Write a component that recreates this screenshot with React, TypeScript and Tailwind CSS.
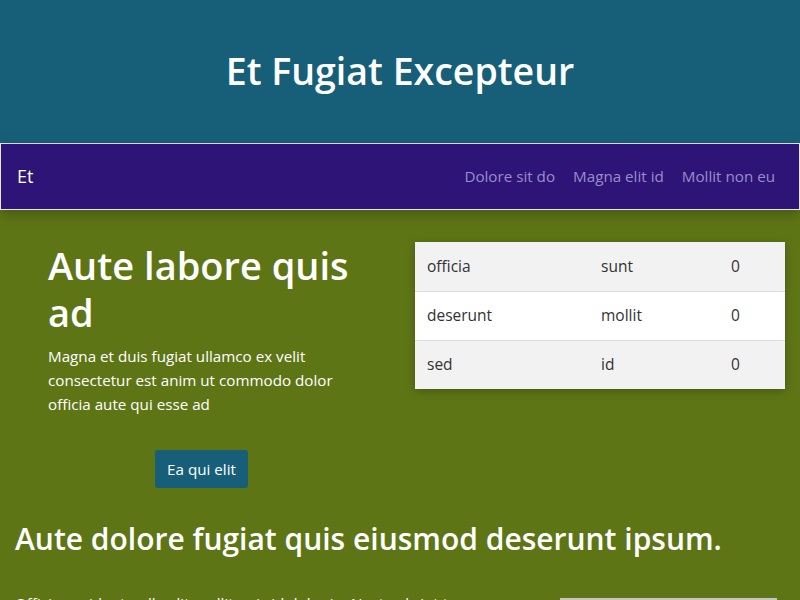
const rows = [
  ['officia', 'sunt', '0'],
  ['deserunt', 'mollit', '0'],
  ['sed', 'id', '0'],
]

export default function App() {
  return (
    <div className="min-h-[600px] bg-[#5e7516] font-['Open_Sans',sans-serif] text-white">
      <header className="flex h-[144px] items-center justify-center border-b border-[#e6e6e6] bg-[#175f78]">
        <h1 className="text-[37.5px] font-semibold">Et Fugiat Excepteur</h1>
      </header>

      <nav className="relative z-10 flex h-[66px] items-center justify-between border-x border-b border-[#e6e6e6] bg-[#2d1476] pl-[16px] pr-[24px] shadow-[0_4px_12px_rgba(0,0,0,0.25)]">
        <span className="text-[18px]">Et</span>
        <ul className="flex gap-[18px] text-[15.2px] text-[#9a8dcc]">
          <li>Dolore sit do</li>
          <li>Magna elit id</li>
          <li>Mollit non eu</li>
        </ul>
      </nav>

      <main className="overflow-hidden">
        <section className="flex items-start pt-[32px]">
          <div className="w-[415px] pl-[48px] pr-[60px]">
            <h2 className="text-[38px] font-semibold leading-[47px]">Aute labore quis ad</h2>
            <p className="mt-[8px] text-[15.2px] leading-[24px]">
              Magna et duis fugiat ullamco ex velit consectetur est anim ut commodo dolor officia aute qui esse ad
            </p>
            <div className="mt-[34px] flex justify-center">
              <button className="rounded-[3px] bg-[#175f78] px-[12px] py-[8px] text-[15.2px] leading-[22px] text-white">
                Ea qui elit
              </button>
            </div>
          </div>

          <table className="w-[370px] text-[15.5px] text-[#333] shadow-[0_2px_8px_rgba(0,0,0,0.25)]">
            <tbody>
              {rows.map((r, i) => (
                <tr key={i} className={i % 2 === 0 ? 'h-[49px] border-b border-[#dddde0] bg-[#f2f2f2] last:border-b-0' : 'h-[49px] border-b border-[#dddde0] bg-white'}>
                  <td className="w-[186px] pl-[12px]">{r[0]}</td>
                  <td className="w-[130px]">{r[1]}</td>
                  <td>{r[2]}</td>
                </tr>
              ))}
            </tbody>
          </table>
        </section>

        <section className="px-[15px] pt-[28px]">
          <h2 className="text-[30px] font-semibold">Aute dolore fugiat quis eiusmod deserunt ipsum.</h2>
          <div className="mt-[31px] flex items-start justify-between">
            <p className="w-[520px] text-[15.2px] leading-[22px]">
              Officia proident nulla elit mollit quis id dolor in. Nostrud sint tempor dolore ullamco pariatur consequat.
            </p>
            <div className="mr-[8px] mt-[6px] h-[120px] w-[217px] bg-[#c4c4c4]" />
          </div>
        </section>
      </main>
    </div>
  )
}
